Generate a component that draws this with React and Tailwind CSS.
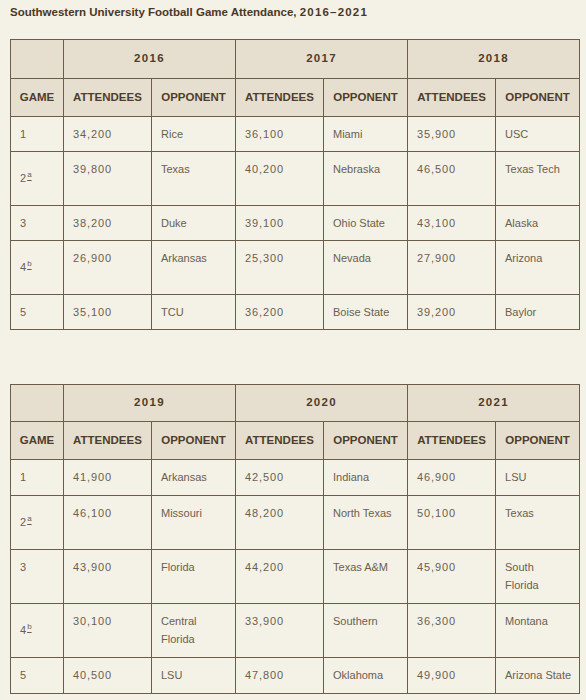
import React from "react";

const font = { fontFamily: '"Liberation Sans", Arial, sans-serif' };

const Num = ({ children }) => <span className="tracking-[0.9px]">{children}</span>;

const Game = ({ g }) => {
  if (g === "2a" || g === "4b") {
    return (
      <span>
        {g[0]}
        <span className="relative -top-[5px] ml-[1px] text-[8px] underline underline-offset-[3px]">
          {g[1]}
        </span>
      </span>
    );
  }
  return <span>{g}</span>;
};

function Table({ years, rows, heights, yearH, headH }) {
  const th = "border border-[#6d5c47] bg-[#e6dfcf] text-center font-bold text-[11.5px] text-[#4f3d2b]";
  const td = "border border-[#6d5c47] align-top pt-[8px] px-[9px] text-[11px] leading-[18px] text-[#6b5f50] whitespace-nowrap";
  return (
    <table className="table-fixed border-collapse w-[569px]" style={font}>
      <colgroup>
        <col className="w-[53px]" />
        <col className="w-[88px]" />
        <col className="w-[84px]" />
        <col className="w-[88px]" />
        <col className="w-[84px]" />
        <col className="w-[88px]" />
        <col className="w-[84px]" />
      </colgroup>
      <thead>
        <tr style={{ height: yearH }}>
          <th className={th}></th>
          {years.map((y) => (
            <th key={y} colSpan={2} className={th}>
              <span className="tracking-[1.3px]">{y}</span>
            </th>
          ))}
        </tr>
        <tr style={{ height: headH }}>
          <th className={th}>GAME</th>
          {years.map((y) => (
            <React.Fragment key={y}>
              <th className={th}>ATTENDEES</th>
              <th className={th}>OPPONENT</th>
            </React.Fragment>
          ))}
        </tr>
      </thead>
      <tbody>
        {rows.map((r, i) => (
          <tr key={i} style={{ height: heights[i] }}>
            <td
              className={
                "border border-[#6d5c47] align-top px-[9px] text-[11px] leading-[18px] text-[#6b5f50] " +
                (r[0].length > 1 ? "pt-[17px]" : "pt-[8px]")
              }
            >
              <Game g={r[0]} />
            </td>
            {r.slice(1).map((c, j) => (
              <td key={j} className={td}>
                {j % 2 === 0 ? (
                  <Num>{c}</Num>
                ) : (
                  c.split("|").map((p, k) => (
                    <React.Fragment key={k}>
                      {k > 0 && <br />}
                      {p}
                    </React.Fragment>
                  ))
                )}
              </td>
            ))}
          </tr>
        ))}
      </tbody>
    </table>
  );
}

const rows1 = [
  ["1", "34,200", "Rice", "36,100", "Miami", "35,900", "USC"],
  ["2a", "39,800", "Texas", "40,200", "Nebraska", "46,500", "Texas Tech"],
  ["3", "38,200", "Duke", "39,100", "Ohio State", "43,100", "Alaska"],
  ["4b", "26,900", "Arkansas", "25,300", "Nevada", "27,900", "Arizona"],
  ["5", "35,100", "TCU", "36,200", "Boise State", "39,200", "Baylor"],
];

const rows2 = [
  ["1", "41,900", "Arkansas", "42,500", "Indiana", "46,900", "LSU"],
  ["2a", "46,100", "Missouri", "48,200", "North Texas", "50,100", "Texas"],
  ["3", "43,900", "Florida", "44,200", "Texas A&M", "45,900", "South|Florida"],
  ["4b", "30,100", "Central|Florida", "33,900", "Southern", "36,300", "Montana"],
  ["5", "40,500", "LSU", "47,800", "Oklahoma", "49,900", "Arizona State"],
];

export default function App() {
  return (
    <div className="min-h-[700px] w-[586px] bg-[#f4f1e6] pl-[10px] pt-[5px]" style={font}>
      <div className="text-[11.5px] font-bold leading-[14px] text-[#4a3826]">
        Southwestern University Football Game Attendance, <span className="tracking-[1.2px]">2016–2021</span>
      </div>
      <div className="mt-[20px]">
        <Table
          years={["2016", "2017", "2018"]}
          rows={rows1}
          heights={[35, 54, 35, 54, 35]}
          yearH={39}
          headH={38}
        />
      </div>
      <div className="mt-[54px]">
        <Table
          years={["2019", "2020", "2021"]}
          rows={rows2}
          heights={[36, 54, 54, 54, 36]}
          yearH={37}
          headH={38}
        />
      </div>
    </div>
  );
}
